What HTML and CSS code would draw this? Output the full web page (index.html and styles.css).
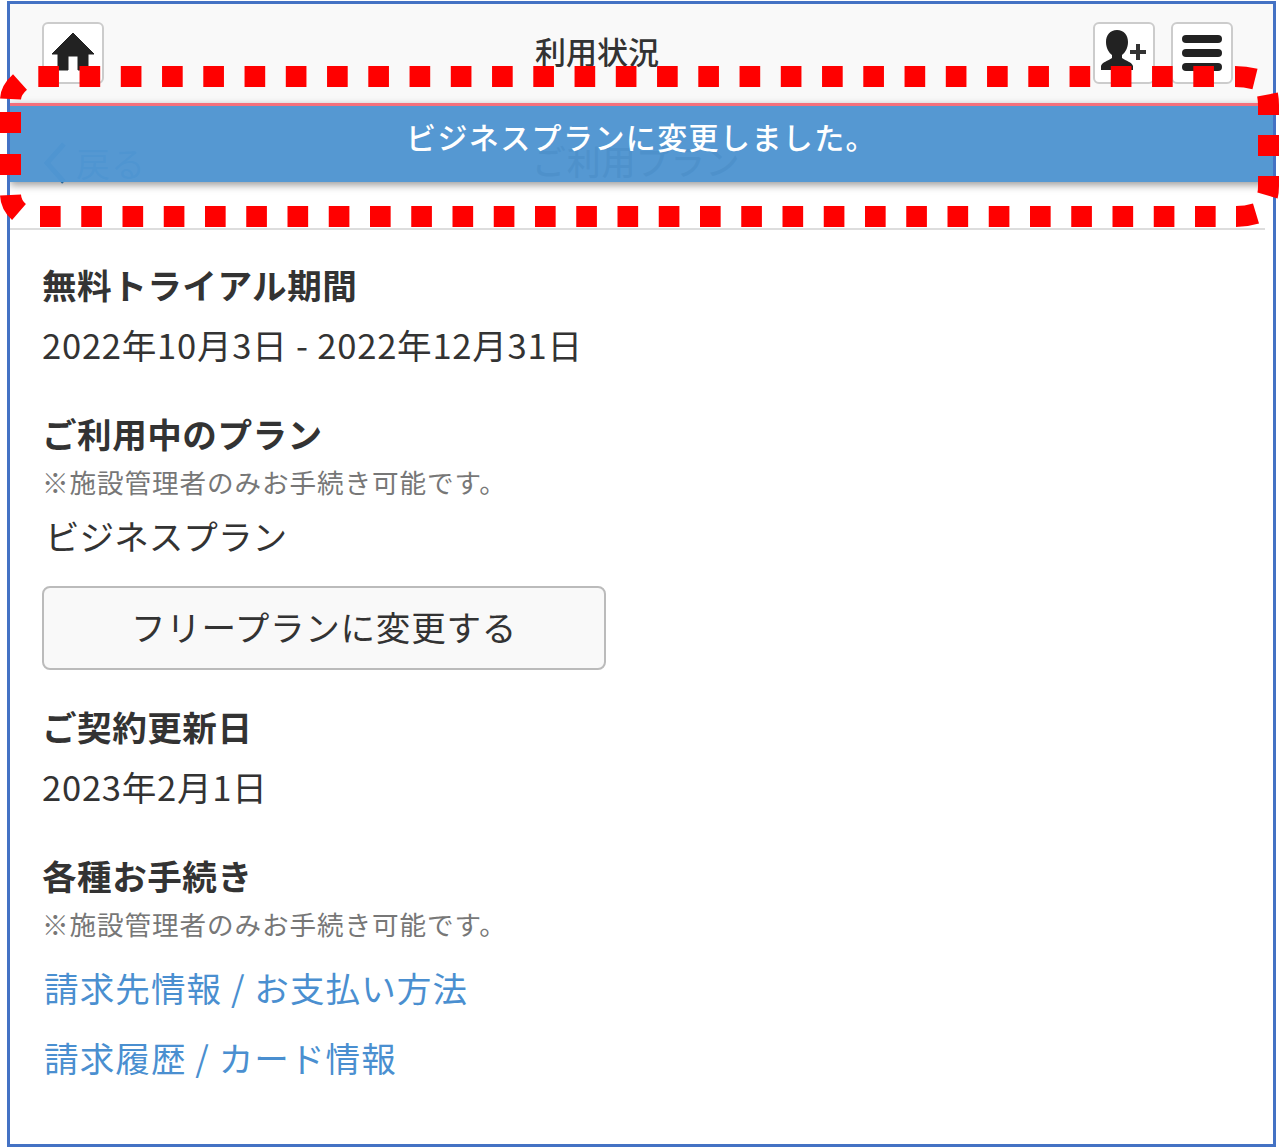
FILE: index.html

```html
<!doctype html>
<html lang="ja">
<head>
    <meta charset="UTF-8">
    <title>利用状況</title>
    <link rel="stylesheet" href="styles.css">
</head>
<body>

<div class="frame">
    <div class="topbar">
        <a class="iconBtn">
            <svg width="44" height="44" viewBox="0 0 44 44"><path d="M22 2 L43 23 L37 23 L37 39 L27 39 L27 25 L17 25 L17 39 L7 39 L7 23 L1 23 Z" fill="#222" stroke="#222" stroke-width="1" stroke-linejoin="round"/></svg>
        </a>
        <div class="topbar-title">利用状況</div>
        <div class="topbar-right">
            <a class="iconBtn">
                <svg width="48" height="48" viewBox="0 0 48 48"><path d="M17 1 C24 1 28 6 28 13 C28 19 25 24 22 26 L22 29 C26 32 32 33 33 37 L33 41 L1 41 L1 37 C2 33 8 32 12 29 L12 26 C9 24 6 19 6 13 C6 6 10 1 17 1 Z" fill="#222"/><path d="M36 15 H40 V21 H46 V25 H40 V31 H36 V25 H30 V21 H36 Z" fill="#333"/></svg>
            </a>
            <a class="iconBtn">
                <svg width="44" height="44" viewBox="0 0 44 44"><rect x="2" y="4" width="40" height="8" rx="4" fill="#222"/><rect x="2" y="18" width="40" height="8" rx="4" fill="#222"/><rect x="2" y="32" width="40" height="8" rx="4" fill="#222"/></svg>
            </a>
        </div>
    </div>

    <div class="subbar">
        <a class="back">
            <svg width="26" height="44" viewBox="0 0 26 44"><path d="M22 3 L5 22 L22 41" fill="none" stroke="#3f8fd0" stroke-width="5"/></svg>
            戻る
        </a>
        <div class="subbar-title">ご利用プラン</div>
    </div>

    <div class="content">
        <section class="block">
            <h2>無料トライアル期間</h2>
            <p class="value date">2022年10月3日 - 2022年12月31日</p>
        </section>

        <section class="block planBlock">
            <h2>ご利用中のプラン</h2>
            <p class="note">※施設管理者のみお手続き可能です。</p>
            <p class="value plan">ビジネスプラン</p>
            <button class="planBtn">フリープランに変更する</button>
        </section>

        <section class="block">
            <h2>ご契約更新日</h2>
            <p class="value date">2023年2月1日</p>
        </section>

        <section class="block">
            <h2>各種お手続き</h2>
            <p class="note">※施設管理者のみお手続き可能です。</p>
            <a class="link">請求先情報 / お支払い方法</a>
            <a class="link">請求履歴 / カード情報</a>
        </section>
    </div>

    <div class="toast">ビジネスプランに変更しました。</div>
</div>

<!--赤い点線の枠-->
<svg class="callout" width="1279" height="240" viewBox="0 0 1279 240">
    <g fill="none" stroke="#ff0000" stroke-width="21">
        <path d="M38.3 76.5 H1215" stroke-dasharray="20.65 20.6"/>
        <path d="M40 216.5 H1217" stroke-dasharray="20.65 20.6"/>
        <path d="M10.5 112 V133 M10.5 154 V175"/>
        <path d="M1268.5 135 V156"/>
        <path d="M10.5 99 Q11 90 20 82"/>
        <path d="M10.5 195 Q11 205 19 212"/>
        <path d="M1235 76.5 Q1245 76.5 1255 79"/>
        <path d="M1236 216.5 Q1246 216.5 1256 213.5"/>
        <path d="M1268.5 115 V105 Q1268.5 100 1267.5 94.5"/>
        <path d="M1268.5 176 V186 Q1268.5 192 1267.5 195.5"/>
    </g>
</svg>

</body>
</html>
```

FILE: styles.css

```css
body {
    margin: 0;
    font-family: "Noto Sans CJK JP", "Liberation Sans", sans-serif;
    color: #333;
    background: #fff;
}
.frame {
    position: relative;
    box-sizing: border-box;
    width: 1269px;
    height: 1146px;
    margin: 1px 0 0 7px;
    border: 3px solid #4472c4;
    overflow: hidden;
}
.topbar {
    display: flex;
    align-items: center;
    justify-content: space-between;
    box-sizing: border-box;
    height: 99px;
    padding: 18px 40px 19px 32px;
    background: #f9f9f9;
}
.topbar-title {
    position: absolute;
    left: 525px;
    top: 25px;
    font-size: 31px;
    font-weight: 500;
    line-height: 44px;
    color: #333;
}
.topbar-right {
    display: flex;
    gap: 16px;
}
.iconBtn {
    display: flex;
    align-items: center;
    justify-content: center;
    box-sizing: border-box;
    width: 62px;
    height: 62px;
    background: #fff;
    border: 2px solid #ccc;
    border-radius: 6px;
}
.subbar {
    position: relative;
    height: 127px;
    box-sizing: border-box;
    margin-right: 8px;
    border-bottom: 2px solid #ddd;
}
.back {
    display: flex;
    align-items: center;
    gap: 8px;
    padding: 38px 0 0 32px;
    font-size: 34px;
    line-height: 44px;
    letter-spacing: 1px;
    color: #3f8fd0;
}
.subbar-title {
    position: absolute;
    left: 522px;
    top: 36px;
    font-size: 34px;
    font-weight: 500;
    line-height: 44px;
    letter-spacing: 0.7px;
}
.content {
    padding: 30px 0 0 32px;
}
.block {
    margin-bottom: 41px;
}
.planBlock {
    margin-bottom: 32px;
}
h2 {
    margin: 0;
    font-size: 34.6px;
    font-weight: 700;
    line-height: 48px;
    letter-spacing: 0.5px;
}
.value {
    margin: 12px 0 0;
    font-size: 34.6px;
    line-height: 48px;
}
.date {
    letter-spacing: 0.75px;
}
.note {
    margin: 1px 0 0;
    font-size: 26.6px;
    line-height: 48px;
    letter-spacing: 0.9px;
    color: #777;
}
.plan {
    margin: 5px 0 0 3px;
}
.planBtn {
    display: block;
    box-sizing: border-box;
    width: 564px;
    height: 84px;
    margin-top: 27px;
    padding: 0 0 4px;
    font-family: inherit;
    font-size: 34.6px;
    letter-spacing: 0.7px;
    color: #333;
    background: #f9f9f9;
    border: 2px solid #bbb;
    border-radius: 8px;
}
.link {
    display: block;
    margin: 16px 0 0 2px;
    font-size: 34.6px;
    line-height: 54px;
    letter-spacing: 1.05px;
    color: #4a8fd0;
}
.note + .link {
    margin-top: 12px;
}
.toast {
    position: absolute;
    left: 0;
    top: 99px;
    width: 100%;
    height: 79px;
    box-sizing: border-box;
    border-top: 3px solid #f4707c;
    padding-top: 8px;
    text-align: center;
    font-size: 30px;
    font-weight: 500;
    line-height: 44px;
    letter-spacing: 1.4px;
    color: #fff;
    background: rgba(80, 149, 209, 0.97);
    box-shadow: 0 3px 8px rgba(0, 0, 0, 0.4);
}
.callout {
    position: absolute;
    left: 0;
    top: 0;
}
```
